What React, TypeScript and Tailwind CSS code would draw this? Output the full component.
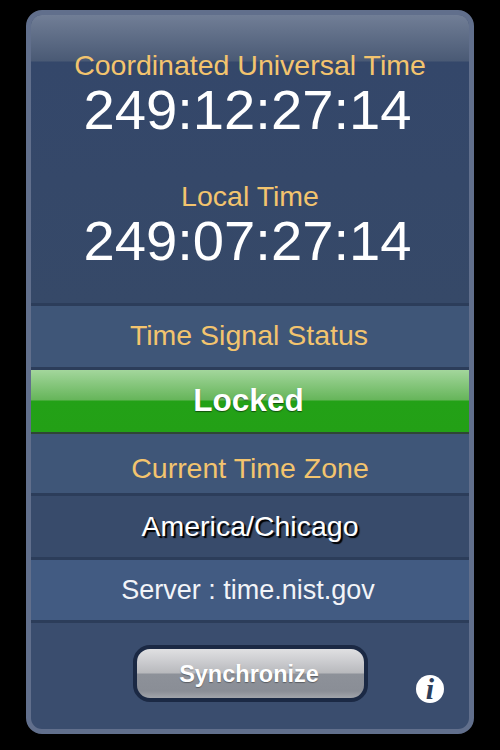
const font = "font-['Liberation_Sans',Arial,sans-serif]";

function Divider() {
    return <div className="h-[3px] bg-[#2c3d5a]" />;
}

function TimeBlock({ label, value }: { label: string; value: string }) {
    return (
        <div className="flex flex-col items-center">
            <div className="text-[28.5px] leading-[31px] text-[#f3c46e]">{label}</div>
            <div className="pr-[5px] text-[56.2px] leading-[57px] text-white">{value}</div>
        </div>
    );
}

export default function App() {
    return (
        <div className={`${font} h-[750px] w-[500px] bg-black px-[26px] pt-[10px]`}>
            <div className="flex h-[724px] w-[448px] flex-col overflow-hidden rounded-[16px] border-[5px] border-[#616f8c] bg-[#3a4d6e]">
                <div className="flex h-[288px] flex-col gap-[43px] bg-[linear-gradient(#717e96_0px,#4a5a75_46px,#34476a_47px,#364968_100%)] pt-[35px]">
                    <TimeBlock label="Coordinated Universal Time" value="249:12:27:14" />
                    <TimeBlock label="Local Time" value="249:07:27:14" />
                </div>
                <Divider />
                <div className="flex h-[61px] items-center justify-center bg-[#3f5678] pb-[2px] pr-[2px] text-[28.5px] text-[#f3c46e]">
                    Time Signal Status
                </div>
                <Divider />
                <div className="flex h-[62px] items-center justify-center bg-[linear-gradient(#a3d69c_0px,#66b55a_30px,#23a117_31px,#23a016_100%)] pr-[3px] text-[31.6px] font-bold text-white [text-shadow:0_1px_1px_rgba(0,0,0,0.5)]">
                    Locked
                </div>
                <div className="h-[2px] bg-[#2f4635]" />
                <div className="flex h-[59px] items-center justify-center bg-[#3f5678] pt-[10px] text-[28.5px] text-[#f3c46e]">
                    Current Time Zone
                </div>
                <Divider />
                <div className="flex h-[61px] items-center justify-center bg-[#384b6b] text-[28.5px] text-white [text-shadow:2px_2px_1px_#000]">
                    America/Chicago
                </div>
                <Divider />
                <div className="flex h-[60px] items-center justify-center bg-[#425b82] pr-[4px] pt-[1px] text-[27px] text-[#f2f4f8]">
                    Server : time.nist.gov
                </div>
                <Divider />
                <div className="relative flex flex-1 justify-center pt-[22px]">
                    <button className="flex h-[57px] w-[235px] items-center justify-center rounded-[17px] border-[4px] border-[#1b2944] bg-[linear-gradient(#e0e0e2_0px,#b8b9bd_24px,#8d9199_25px,#8a8e96_42px,#a2a5ab_100%)] pr-[2px] pt-[2px] text-[23.5px] font-bold text-white [text-shadow:0_1px_1px_rgba(0,0,0,0.35)]">
                        Synchronize
                    </button>
                    <div className="absolute left-[385px] top-[52px] flex h-[28px] w-[28px] items-center justify-center rounded-full bg-white font-['Liberation_Serif',serif] text-[30px] font-bold italic leading-none text-[#2c3d5a]">
                        i
                    </div>
                </div>
            </div>
        </div>
    );
}
